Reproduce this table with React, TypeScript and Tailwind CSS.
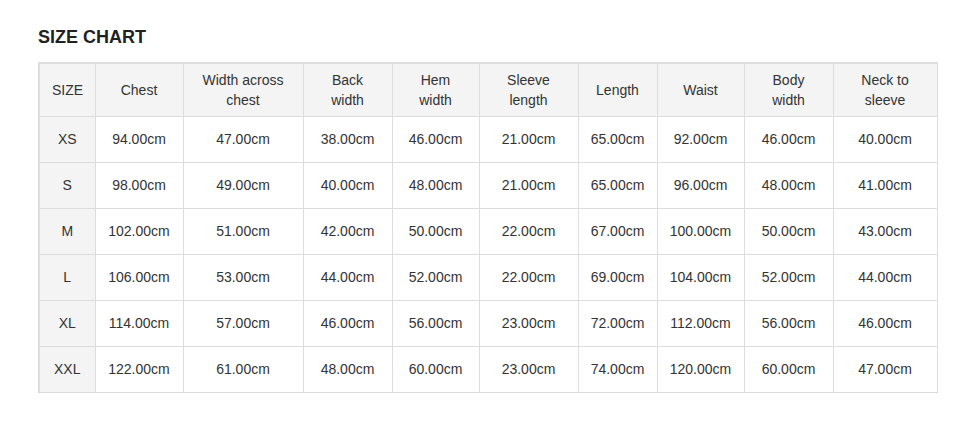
import React from 'react';

const headers = ['SIZE', 'Chest', 'Width across chest', 'Back width', 'Hem width', 'Sleeve length', 'Length', 'Waist', 'Body width', 'Neck to sleeve'];
const widths = [56, 88, 120, 89, 87, 99, 79, 87, 89, 104];

const rows: [string, number[]][] = [
  ['XS', [94, 47, 38, 46, 21, 65, 92, 46, 40]],
  ['S', [98, 49, 40, 48, 21, 65, 96, 48, 41]],
  ['M', [102, 51, 42, 50, 22, 67, 100, 50, 43]],
  ['L', [106, 53, 44, 52, 22, 69, 104, 52, 44]],
  ['XL', [114, 57, 46, 56, 23, 72, 112, 56, 46]],
  ['XXL', [122, 61, 48, 60, 23, 74, 120, 60, 47]],
];

const App: React.FC = () => {
  return (
    <div className="min-h-[426px] bg-white px-[38px] pt-[26px] text-[#333] font-['Liberation_Sans',Arial,sans-serif]">
      <h2 className="text-[18px] font-bold leading-[22px] mb-[14px] text-[#222]">SIZE CHART</h2>
      <table className="table-fixed border-collapse w-[898px] text-[14px] leading-[20px] border-t-2 border-l-2 border-[#ddd]">
        <colgroup>
          {widths.map((w, i) => (
            <col key={i} style={{ width: w }} />
          ))}
        </colgroup>
        <thead>
          <tr className="h-[53px] bg-[#f4f4f4]">
            {headers.map((h) => (
              <th key={h} className="border border-[#ddd] font-normal text-center px-3">
                {h}
              </th>
            ))}
          </tr>
        </thead>
        <tbody>
          {rows.map(([size, vals]) => (
            <tr key={size} className="h-[46px]">
              <td className="border border-[#ddd] bg-[#f4f4f4] text-center">{size}</td>
              {vals.map((v, i) => (
                <td key={i} className="border border-[#ddd] text-center">
                  {v.toFixed(2)}cm
                </td>
              ))}
            </tr>
          ))}
        </tbody>
      </table>
    </div>
  );
};

export default App;
